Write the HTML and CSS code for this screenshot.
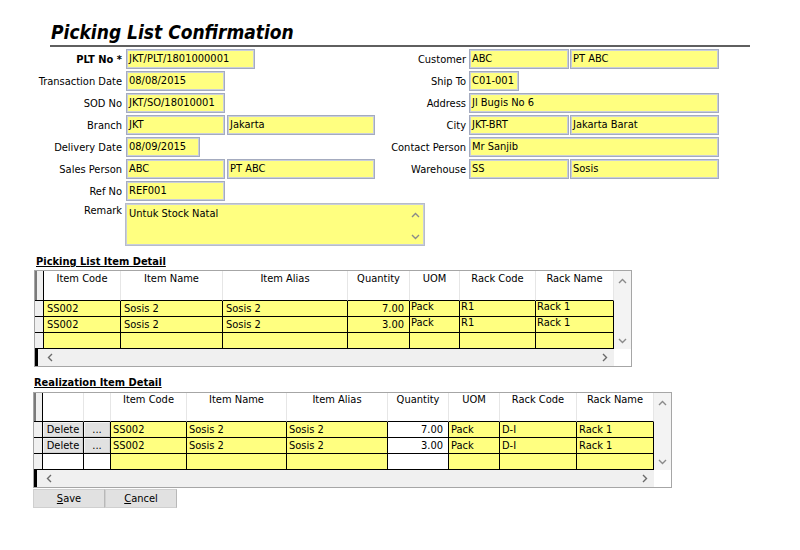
FILE: index.html
```html
<!DOCTYPE html>
<html>
<head>
<meta charset="utf-8">
<title>Picking List Confirmation</title>
<link rel="stylesheet" href="styles.css">
</head>
<body>
<div class="page">
  <div class="title-bar"><h1 class="title">Picking List Confirmation</h1></div>

  <div class="form">
    <div class="col col-left">
      <div class="row"><span class="lbl lbl-b">PLT No *</span><div class="fld w129">JKT/PLT/1801000001</div></div>
      <div class="row"><span class="lbl">Transaction Date</span><div class="fld w99">08/08/2015</div></div>
      <div class="row"><span class="lbl">SOD No</span><div class="fld w99">JKT/SO/18010001</div></div>
      <div class="row"><span class="lbl">Branch</span><div class="fld w99">JKT</div><div class="fld w148">Jakarta</div></div>
      <div class="row"><span class="lbl">Delivery Date</span><div class="fld w74">08/09/2015</div></div>
      <div class="row"><span class="lbl">Sales Person</span><div class="fld w99">ABC</div><div class="fld w148">PT ABC</div></div>
      <div class="row"><span class="lbl">Ref No</span><div class="fld w99">REF001</div></div>
      <div class="row row-memo"><span class="lbl">Remark</span>
        <div class="fld memo"><span class="memo-text">Untuk Stock Natal</span>
          <div class="memo-sb">
            <svg class="chev" width="9" height="6" viewBox="0 0 9 6"><polyline points="1,5 4.5,1.5 8,5" fill="none" stroke="#8a8a8a" stroke-width="1.4"/></svg>
            <svg class="chev" width="9" height="6" viewBox="0 0 9 6"><polyline points="1,1 4.5,4.5 8,1" fill="none" stroke="#8a8a8a" stroke-width="1.4"/></svg>
          </div>
        </div>
      </div>
    </div>
    <div class="col col-right">
      <div class="row"><span class="lbl">Customer</span><div class="fld w100">ABC</div><div class="fld w149">PT ABC</div></div>
      <div class="row"><span class="lbl">Ship To</span><div class="fld w50">C01-001</div></div>
      <div class="row"><span class="lbl">Address</span><div class="fld w250">Jl Bugis No 6</div></div>
      <div class="row"><span class="lbl">City</span><div class="fld w100">JKT-BRT</div><div class="fld w149">Jakarta Barat</div></div>
      <div class="row"><span class="lbl">Contact Person</span><div class="fld w250">Mr Sanjib</div></div>
      <div class="row"><span class="lbl">Warehouse</span><div class="fld w100">SS</div><div class="fld w149">Sosis</div></div>
    </div>
  </div>

  <div class="section section-a">
    <h2 class="sec-title">Picking List Item Detail</h2>
    <div class="grid grid-a">
      <div class="gbody">
        <div class="grow ghead">
          <div class="hc rh"></div>
          <div class="hc">Item Code</div>
          <div class="hc">Item Name</div>
          <div class="hc">Item Alias</div>
          <div class="hc">Quantity</div>
          <div class="hc">UOM</div>
          <div class="hc">Rack Code</div>
          <div class="hc">Rack Name</div>
        </div>
        <div class="grow">
          <div class="dc rh"></div>
          <div class="dc">SS002</div>
          <div class="dc">Sosis 2</div>
          <div class="dc">Sosis 2</div>
          <div class="dc num">7.00</div>
          <div class="dc tight">Pack</div>
          <div class="dc tight">R1</div>
          <div class="dc tight">Rack 1</div>
        </div>
        <div class="grow">
          <div class="dc rh"></div>
          <div class="dc">SS002</div>
          <div class="dc">Sosis 2</div>
          <div class="dc">Sosis 2</div>
          <div class="dc num">3.00</div>
          <div class="dc tight">Pack</div>
          <div class="dc tight">R1</div>
          <div class="dc tight">Rack 1</div>
        </div>
        <div class="grow">
          <div class="dc rh"></div>
          <div class="dc"></div>
          <div class="dc"></div>
          <div class="dc"></div>
          <div class="dc"></div>
          <div class="dc"></div>
          <div class="dc"></div>
          <div class="dc"></div>
        </div>
      </div>
      <div class="vscroll">
        <svg width="9" height="6" viewBox="0 0 9 6"><polyline points="1,5 4.5,1.5 8,5" fill="none" stroke="#8a8a8a" stroke-width="1.4"/></svg>
        <svg width="9" height="6" viewBox="0 0 9 6"><polyline points="1,1 4.5,4.5 8,1" fill="none" stroke="#8a8a8a" stroke-width="1.4"/></svg>
      </div>
      <div class="hscroll">
        <svg width="6" height="9" viewBox="0 0 6 9"><polyline points="5,1 1.5,4.5 5,8" fill="none" stroke="#6a6a6a" stroke-width="1.4"/></svg>
        <svg width="6" height="9" viewBox="0 0 6 9"><polyline points="1,1 4.5,4.5 1,8" fill="none" stroke="#6a6a6a" stroke-width="1.4"/></svg>
      </div>
      <div class="corner"></div>
    </div>
  </div>

  <div class="section section-b">
    <h2 class="sec-title">Realization Item Detail</h2>
    <div class="grid grid-b">
      <div class="gbody">
        <div class="grow ghead">
          <div class="hc rh"></div>
          <div class="hc"></div>
          <div class="hc"></div>
          <div class="hc">Item Code</div>
          <div class="hc">Item Name</div>
          <div class="hc">Item Alias</div>
          <div class="hc">Quantity</div>
          <div class="hc">UOM</div>
          <div class="hc">Rack Code</div>
          <div class="hc">Rack Name</div>
        </div>
        <div class="grow">
          <div class="dc rh"></div>
          <div class="dc btn-cell"><span class="cbtn">Delete</span></div>
          <div class="dc btn-cell"><span class="cbtn">...</span></div>
          <div class="dc">SS002</div>
          <div class="dc">Sosis 2</div>
          <div class="dc">Sosis 2</div>
          <div class="dc num white">7.00</div>
          <div class="dc">Pack</div>
          <div class="dc">D-I</div>
          <div class="dc">Rack 1</div>
        </div>
        <div class="grow">
          <div class="dc rh"></div>
          <div class="dc btn-cell"><span class="cbtn">Delete</span></div>
          <div class="dc btn-cell"><span class="cbtn">...</span></div>
          <div class="dc">SS002</div>
          <div class="dc">Sosis 2</div>
          <div class="dc">Sosis 2</div>
          <div class="dc num white">3.00</div>
          <div class="dc">Pack</div>
          <div class="dc">D-I</div>
          <div class="dc">Rack 1</div>
        </div>
        <div class="grow">
          <div class="dc rh"></div>
          <div class="dc white"></div>
          <div class="dc white"></div>
          <div class="dc"></div>
          <div class="dc"></div>
          <div class="dc"></div>
          <div class="dc white"></div>
          <div class="dc"></div>
          <div class="dc"></div>
          <div class="dc"></div>
        </div>
      </div>
      <div class="vscroll">
        <svg width="9" height="6" viewBox="0 0 9 6"><polyline points="1,5 4.5,1.5 8,5" fill="none" stroke="#8a8a8a" stroke-width="1.4"/></svg>
        <svg width="9" height="6" viewBox="0 0 9 6"><polyline points="1,1 4.5,4.5 8,1" fill="none" stroke="#8a8a8a" stroke-width="1.4"/></svg>
      </div>
      <div class="hscroll">
        <svg width="6" height="9" viewBox="0 0 6 9"><polyline points="5,1 1.5,4.5 5,8" fill="none" stroke="#6a6a6a" stroke-width="1.4"/></svg>
        <svg width="6" height="9" viewBox="0 0 6 9"><polyline points="1,1 4.5,4.5 1,8" fill="none" stroke="#6a6a6a" stroke-width="1.4"/></svg>
      </div>
      <div class="corner"></div>
    </div>
    <div class="actions">
      <button class="act"><u>S</u>ave</button><button class="act"><u>C</u>ancel</button>
    </div>
  </div>
</div>
</body>
</html>
```
FILE: styles.css
```css
* { box-sizing: border-box; }
html, body { margin: 0; padding: 0; background: #ffffff; }
body {
  font-family: "DejaVu Sans Condensed", "DejaVu Sans", sans-serif;
  font-size: 11px;
  color: #000;
  width: 800px;
  height: 550px;
  overflow: hidden;
}
.page { position: relative; }

.title-bar {
  margin-left: 50px;
  width: 700px;
  padding-top: 20px;
  height: 47px;
  border-bottom: 2px solid #5f5f5f;
}
.title {
  margin: 0;
  padding-left: 1px;
  font-size: 19px;
  line-height: 25px;
  font-weight: bold;
  font-style: italic;
  color: #000;
}

.form {
  display: flex;
  margin-top: 2px;
  padding-left: 30px;
}
.col-left { width: 356px; flex-shrink: 0; }
.col-right { width: 340px; flex-shrink: 0; }

.row {
  display: flex;
  align-items: center;
  height: 20px;
  margin-bottom: 2px;
}
.lbl {
  flex-shrink: 0;
  text-align: right;
  white-space: nowrap;
  color: #000;
}
.col-left .lbl { width: 92px; margin-right: 4px; }
.col-right .lbl { width: 80px; margin-right: 3px; }
.lbl-b { font-weight: bold; }

.fld {
  flex-shrink: 0;
  height: 20px;
  line-height: 17px;
  padding-left: 2px;
  background: #ffff80;
  border: 1px solid #a4abbf;
  box-shadow: inset 0 0 0 1px #c9cedb;
  white-space: nowrap;
  overflow: hidden;
}
.fld + .fld { margin-left: 2px; }
.col-right .fld + .fld { margin-left: 1px; }
.w50 { width: 50px; }
.w74 { width: 74px; }
.w99 { width: 99px; }
.w100 { width: 100px; }
.w129 { width: 129px; }
.w148 { width: 148px; }
.w149 { width: 149px; }
.w250 { width: 250px; }

.row-memo { align-items: flex-start; height: 43px; margin-bottom: 0; }
.row-memo .lbl { padding-top: 1px; }
.memo {
  width: 300px;
  height: 43px;
  margin-left: -1px;
  display: flex;
  justify-content: space-between;
  padding-top: 2px;
  line-height: 16px;
  border-color: #b7bcc9;
}
.memo-text { padding-left: 1px; }
.memo-sb {
  width: 18px;
  display: flex;
  flex-direction: column;
  justify-content: space-between;
  align-items: center;
  padding: 6px 0 5px;
}
.chev { display: block; }

.section-a { margin-left: 34px; margin-top: 7px; }
.section-b { margin-left: 33px; margin-top: 7px; }
.sec-title {
  margin: 0;
  height: 14px;
  line-height: 18px;
  font-size: 11px;
  font-weight: bold;
  text-decoration: underline;
  color: #000;
}
.section-a .sec-title { padding-left: 2px; }
.section-b .sec-title { padding-left: 1px; }

.grid {
  display: grid;
  border: 1px solid #a6a6a6;
  background: #fff;
}
.grid-a { margin-top: 3px; width: 598px; grid-template-columns: 579px 17px; }
.grid-b { margin-top: 4px; width: 639px; grid-template-columns: 620px 17px; }

.grow { display: grid; }
.grid-a .grow { grid-template-columns: 9px 77px 102px 125px 62px 50px 76px 78px; }
.grid-b .grow { grid-template-columns: 9px 41px 27px 76px 100px 101px 61px 51px 77px 77px; }

.hc {
  height: 30px;
  background: #fff;
  border-right: 1px solid #e6e6e6;
  border-bottom: 1px solid #000;
  text-align: center;
  padding-top: 1px;
  line-height: 14px;
  white-space: nowrap;
  overflow: hidden;
}
.grid-b .hc { height: 29px; padding-top: 0; }
.hc.rh {
  background: #f0f0f0;
  border-right: 1px solid #000;
  box-shadow: inset 2px 0 0 #7a7a7a;
}

.dc {
  height: 16px;
  background: #ffff80;
  border-right: 1px solid #000;
  border-bottom: 1px solid #000;
  padding: 0 0 0 3px;
  line-height: 15px;
  white-space: nowrap;
  overflow: hidden;
}
.dc.rh { background: #f0f0f0; padding: 0; }
.dc.num { text-align: right; padding: 0 5px 0 0; }
.dc.tight { padding-left: 1px; line-height: 12px; }
.grid-b .dc { padding-left: 2px; }
.grid-b .dc.num { padding-left: 0; }
.dc.white { background: #fff; }
.dc.btn-cell {
  padding: 0;
  background: #e1e1e1;
  display: flex;
}
.cbtn {
  flex: 1;
  text-align: center;
  border: 1px solid #f4f4f4;
  border-right-color: #d0d0d0;
  border-bottom-color: #d0d0d0;
  line-height: 13px;
}

.vscroll {
  background: #f3f3f3;
  display: flex;
  flex-direction: column;
  justify-content: space-between;
  align-items: center;
  padding: 7px 0 5px;
}
.hscroll {
  height: 17px;
  background: #f0f0f0;
  border-left: 3px solid #000;
  display: flex;
  justify-content: space-between;
  align-items: center;
  padding: 0 6px 0 9px;
}
.corner { background: #fff; }

.actions { display: flex; margin-top: 1px; }
.act {
  width: 72px;
  height: 19px;
  margin: 0;
  padding: 0;
  font-family: "DejaVu Sans Condensed", "DejaVu Sans", sans-serif;
  font-size: 11px;
  color: #000;
  background: #e1e1e1;
  border: 1px solid #cfcfcf;
  border-right-color: #b8b8b8;
}
```
